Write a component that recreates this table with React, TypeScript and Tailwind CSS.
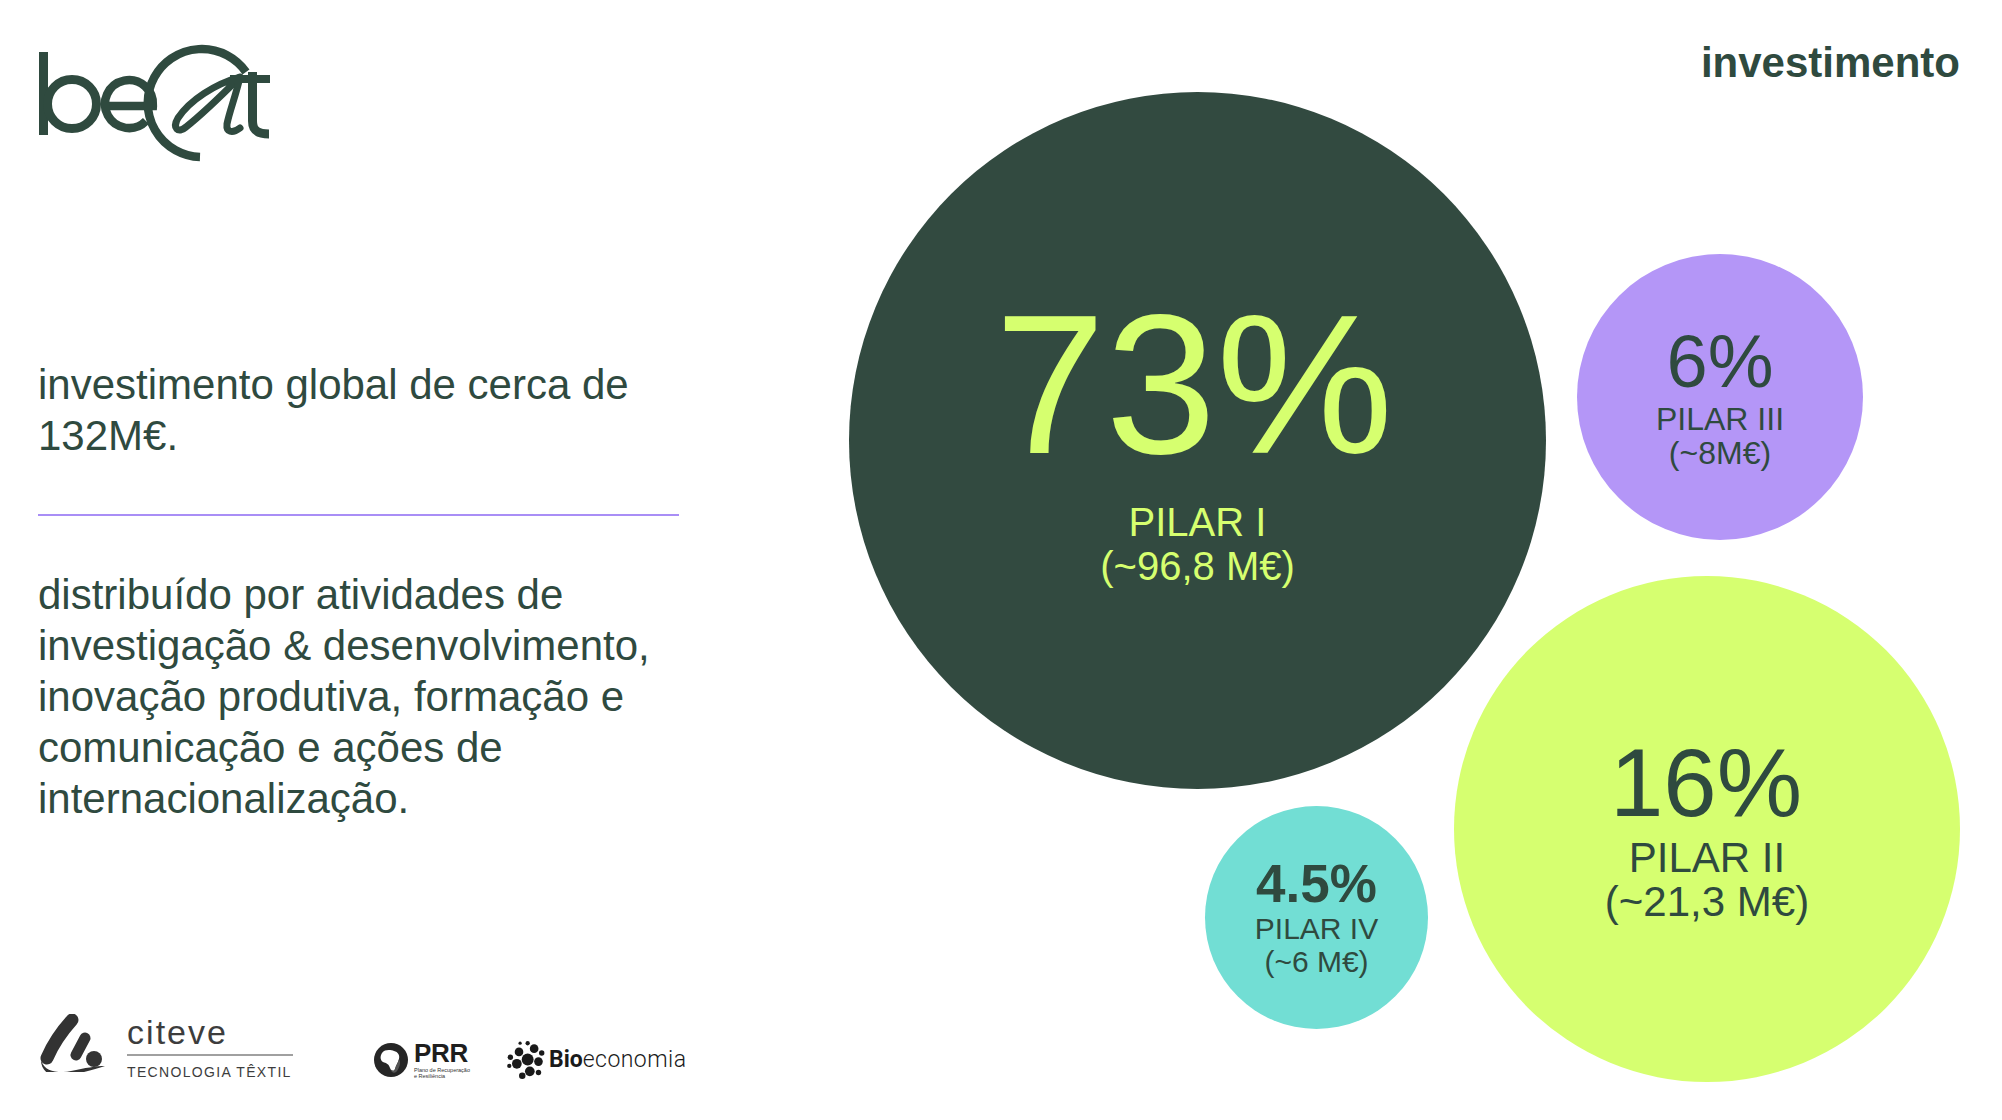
import React from "react";

const FONT = "font-['Liberation_Sans',Arial,Helvetica,sans-serif]";

function BeatLogo() {
  return (
    <svg width="240" height="125" viewBox="36 42 240 125" className="block -ml-[2px]" fill="none" stroke="#2f4a3f">
      {/* b */}
      <line x1="43.5" y1="52" x2="43.5" y2="135" strokeWidth="9" />
      <circle cx="72" cy="104" r="24.5" strokeWidth="9" />
      {/* e */}
      <path d="M 105 106 L 152.9 106 A 24 24 0 1 0 146 121" strokeWidth="8.5" />
      {/* @ ring */}
      <path d="M 246 72 A 54 54 0 1 0 200 157" strokeWidth="8.5" />
      {/* a */}
      <path d="M 240 77 C 224 93 200 116 186 127 C 178 134 172 128 178 118 C 190 100 215 84 240 77" strokeWidth="7" strokeLinejoin="round" />
      <path d="M 240 77 C 236 95 229 113 227 124 C 226 132 232 134 240 128" strokeWidth="7" strokeLinecap="round" />
      {/* t */}
      <path d="M 252.5 72 L 252.5 121 C 252.5 131 258 134 269 134" strokeWidth="9" />
      <line x1="230" y1="79" x2="270" y2="79" strokeWidth="8" />
    </svg>
  );
}

function CiteveIcon() {
  return (
    <svg width="66" height="58" viewBox="38 1014 66 58" className="block">
      <path d="M 71 1020 C 62 1030 52 1044 46 1058" stroke="#333" strokeWidth="13" strokeLinecap="round" fill="none" />
      <line x1="84" y1="1038" x2="75" y2="1055" stroke="#333" strokeWidth="11" strokeLinecap="round" />
      <circle cx="93" cy="1059" r="8" fill="#333" />
      <path d="M 40 1058 C 41 1071 55 1074 70 1071 C 84 1068 95 1066 104 1066 C 95 1069 84 1072 70 1075 C 53 1079 39 1074 40 1058 Z" fill="#333" />
    </svg>
  );
}

function PrrIcon() {
  return (
    <svg width="34" height="34" viewBox="0 0 34 34" className="block">
      <circle cx="17" cy="17" r="17" fill="#262626" />
      <path d="M 8 10 C 11 6 17 7 20 8 C 24 9 26 12 25 16 C 24 20 22 22 21 26 C 20 29 17 28 16 25 C 15 21 12 20 9 19 C 6 17 6 13 8 10 Z" fill="#ffffff" />
      <path d="M 16 25 C 17 28 20 29 21 26 C 22 22 24 20 25 16 C 27 19 26 24 23 28 C 21 31 17 30 16 25 Z" fill="#555" />
    </svg>
  );
}

function BioDots() {
  const dots: [number, number, number][] = [
    [20, 18, 5.5], [12, 11, 4], [26, 8, 4], [10, 22, 4.5], [22, 29, 4.5], [30, 20, 4],
    [4, 16, 2.5], [3, 24, 2], [15, 33, 3], [30, 30, 2.5], [20, 3, 2], [33, 12, 2.5], [13, 3, 1.5],
  ];
  return (
    <svg width="39" height="40" viewBox="0 0 36 37" className="block">
      {dots.map(([x, y, r], i) => (
        <circle key={i} cx={x} cy={y} r={r} fill="#1a1a1a" />
      ))}
    </svg>
  );
}

export default function App() {
  return (
    <div className={`relative w-[2002px] h-[1120px] bg-white overflow-hidden flex ${FONT}`}>
      {/* Left column */}
      <div className="w-[720px] shrink-0 flex flex-col pl-[38px] pt-[42px]">
        <BeatLogo />
        <p className="mt-[192px] text-[42px] leading-[51px] text-[#2f4a3f] whitespace-nowrap">
          investimento global de cerca de
          <br />
          132M€.
        </p>
        <div className="mt-[53px] h-[2px] w-[641px] bg-[#a98ef6]" />
        <p className="mt-[53px] text-[42px] leading-[51px] text-[#2f4a3f] whitespace-nowrap">
          distribuído por atividades de
          <br />
          investigação &amp; desenvolvimento,
          <br />
          inovação produtiva, formação e
          <br />
          comunicação e ações de
          <br />
          internacionalização.
        </p>
        <div className="mt-[191px] flex items-start">
          <div className="mt-[-1px] ml-[1px]">
            <CiteveIcon />
          </div>
          <div className="ml-[22px] flex flex-col w-[166px]">
            <div className="text-[34px] leading-[34px] tracking-[0.06em] text-[#3d3d3d]">citeve</div>
            <div className="mt-[5px] h-[1.5px] w-[166px] bg-[#a0a0a0]" />
            <div className="mt-[9px] text-[14px] leading-[14px] tracking-[0.095em] text-[#3d3d3d] whitespace-nowrap">
              TECNOLOGIA TÊXTIL
            </div>
          </div>
          <div className="ml-[81px] mt-[28px]">
            <PrrIcon />
          </div>
          <div className="ml-[6px] mt-[26px] flex flex-col">
            <div className="text-[26px] leading-[24px] font-black tracking-[-0.01em] text-[#1e1e1e]">PRR</div>
            <div className="mt-[2px] text-[5.5px] leading-[6px] text-[#333]">Plano de Recuperação</div>
            <div className="text-[5.5px] leading-[6px] text-[#333]">e Resiliência</div>
          </div>
          <div className="ml-[36px] mt-[25px]">
            <BioDots />
          </div>
          <div className="ml-[4px] mt-[33px] text-[23px] leading-[24px] text-[#1a1a1a] whitespace-nowrap font-['Roboto','Liberation_Sans',sans-serif]">
            <span className="font-bold">Bio</span>
            <span className="font-light tracking-[0.02em]">economia</span>
          </div>
        </div>
      </div>

      {/* Right area: bubble chart */}
      <div className="relative flex-1">
        <div className="pt-[39px] pr-[42px] text-right text-[42px] leading-[48px] font-bold text-[#2f4a3f]">
          investimento
        </div>

        {/* PILAR I */}
        <div className="absolute left-[129px] top-[92px] w-[697px] h-[697px] rounded-full bg-[#324a40] flex flex-col items-center justify-center text-[#d6ff6f] pb-[10px]">
          <div className="mr-[7px] text-[199px] leading-[200px]">73%</div>
          <div className="mt-[16px] text-[40px] leading-[44px] text-center">
            PILAR I
            <br />
            (~96,8 M€)
          </div>
        </div>

        {/* PILAR III */}
        <div className="absolute left-[857px] top-[254px] w-[286px] h-[286px] rounded-full bg-[#b496f7] flex flex-col items-center justify-center text-[#2f4a3f]">
          <div className="text-[74px] leading-[74px]">6%</div>
          <div className="mt-[3px] text-[32px] leading-[34px] text-center">
            PILAR III
            <br />
            (~8M€)
          </div>
        </div>

        {/* PILAR II */}
        <div className="absolute left-[734px] top-[576px] w-[506px] h-[506px] rounded-full bg-[#d6ff70] flex flex-col items-center justify-center text-[#2f4a3f]">
          <div className="mr-[2px] text-[96px] leading-[96px]">16%</div>
          <div className="mt-[5px] text-[42px] leading-[44px] text-center">
            PILAR II
            <br />
            (~21,3 M€)
          </div>
        </div>

        {/* PILAR IV */}
        <div className="absolute left-[485px] top-[806px] w-[223px] h-[223px] rounded-full bg-[#72ded4] flex flex-col items-center justify-center text-[#2f4a3f]">
          <div className="text-[53px] leading-[53px] font-bold">4.5%</div>
          <div className="mt-[2px] text-[30px] leading-[33px] text-center">
            PILAR IV
            <br />
            (~6 M€)
          </div>
        </div>
      </div>
    </div>
  );
}
